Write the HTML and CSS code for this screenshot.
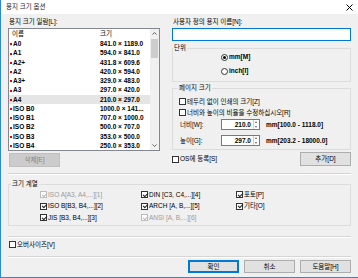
FILE: index.html
```html
<!DOCTYPE html>
<html lang="ko">
<head>
    <meta charset="UTF-8">
    <title>용지 크기 옵션</title>
    <link rel="stylesheet" href="styles.css">
</head>
<body>
    <div class="window">
        <div class="titlebar">
            <span class="title">용지 크기 옵션</span>
            <svg class="close" width="7" height="7" viewBox="0 0 7 7"><path d="M0.5 0.5L6.5 6.5M6.5 0.5L0.5 6.5" stroke="#000" stroke-width="1"/></svg>
        </div>

        <div class="content">
            <div class="top">
                <!-- 왼쪽: 용지 목록 -->
                <div class="left">
                    <div class="label">용지 크기 일람[L]:</div>
                    <div class="list">
                        <div class="list-body">
                            <div class="list-head">
                                <span class="c-name">이름</span>
                                <span class="c-size">크기</span>
                            </div>
                            <div class="row"><span class="c-name mark">A0</span><span class="c-size">841.0 × 1189.0</span></div>
                            <div class="row"><span class="c-name mark">A1</span><span class="c-size">594.0 × 841.0</span></div>
                            <div class="row"><span class="c-name mark">A2+</span><span class="c-size">431.8 × 609.6</span></div>
                            <div class="row"><span class="c-name mark">A2</span><span class="c-size">420.0 × 594.0</span></div>
                            <div class="row"><span class="c-name mark">A3+</span><span class="c-size">329.0 × 483.0</span></div>
                            <div class="row"><span class="c-name mark">A3</span><span class="c-size">297.0 × 420.0</span></div>
                            <div class="row selected"><span class="c-name mark">A4</span><span class="c-size">210.0 × 297.0</span></div>
                            <div class="row"><span class="c-name mark">ISO B0</span><span class="c-size">1000.0 × 141...</span></div>
                            <div class="row"><span class="c-name mark">ISO B1</span><span class="c-size">707.0 × 1000.0</span></div>
                            <div class="row"><span class="c-name mark">ISO B2</span><span class="c-size">500.0 × 707.0</span></div>
                            <div class="row"><span class="c-name mark">ISO B3</span><span class="c-size">353.0 × 500.0</span></div>
                            <div class="row"><span class="c-name mark">ISO B4</span><span class="c-size">250.0 × 353.0</span></div>
                        </div>
                        <div class="scrollbar">
                            <svg class="arrow" width="5" height="3" viewBox="0 0 5 3"><path d="M0.5 2.5L2.5 0.5L4.5 2.5" stroke="#606060" fill="none"/></svg>
                            <span class="thumb"></span>
                            <span class="track"></span>
                            <svg class="arrow" width="5" height="3" viewBox="0 0 5 3"><path d="M0.5 0.5L2.5 2.5L4.5 0.5" stroke="#606060" fill="none"/></svg>
                        </div>
                    </div>
                    <button class="btn disabled">삭제[E]</button>
                </div>

                <!-- 오른쪽: 사용자 정의 -->
                <div class="right">
                    <div class="label">사용자 정의 용지 이름[N]:</div>
                    <div class="name-input"></div>

                    <fieldset class="group unit">
                        <legend>단위</legend>
                        <div class="radios">
                            <div class="opt"><span class="radio on"></span><span class="strong">mm[M]</span></div>
                            <div class="opt"><span class="radio"></span><span class="strong">inch[I]</span></div>
                        </div>
                    </fieldset>

                    <fieldset class="group page">
                        <legend>페이지 크기</legend>
                        <div class="page-inner">
                            <div class="opt"><span class="cb"></span>테두리 없이 인쇄의 크기[Z]</div>
                            <div class="opt"><span class="cb"></span>너비와 높이의 비율을 수정하십시오[R]</div>
                            <div class="size-row first">
                                <span class="size-label">너비[W]:</span>
                                <div class="spin">
                                    <span class="spin-val">210.0</span>
                                    <span class="spin-btns"><i class="up"></i><i class="down"></i></span>
                                </div>
                                <span class="range">mm[100.0 - 1118.0]</span>
                            </div>
                            <div class="size-row">
                                <span class="size-label">높이[G]:</span>
                                <div class="spin">
                                    <span class="spin-val">297.0</span>
                                    <span class="spin-btns"><i class="up"></i><i class="down"></i></span>
                                </div>
                                <span class="range">mm[203.2 - 18000.0]</span>
                            </div>
                        </div>
                    </fieldset>

                    <div class="os-row">
                        <div class="opt"><span class="cb"></span>OS에 등록[S]</div>
                        <button class="btn">추가[D]</button>
                    </div>
                </div>
            </div>

            <div class="sep first-sep"></div>

            <fieldset class="group series">
                <legend>크기 계열</legend>
                <div class="series-grid">
                    <div class="opt off"><span class="cb checked"></span>ISO A[A3, A4,...][1]</div>
                    <div class="opt"><span class="cb checked"></span>DIN [C3, C4,...][4]</div>
                    <div class="opt"><span class="cb checked"></span>포토[P]</div>
                    <div class="opt"><span class="cb checked"></span>ISO B[B3, B4,...][2]</div>
                    <div class="opt"><span class="cb checked"></span>ARCH [A, B,...][5]</div>
                    <div class="opt"><span class="cb checked"></span>기타[O]</div>
                    <div class="opt"><span class="cb checked"></span>JIS [B3, B4,...][3]</div>
                    <div class="opt off"><span class="cb checked"></span>ANSI [A, B,...][6]</div>
                </div>
            </fieldset>

            <div class="sep mid-sep"></div>

            <div class="opt oversize"><span class="cb"></span>오버사이즈[V]</div>

            <div class="sep last-sep"></div>

            <div class="buttons">
                <button class="btn default">확인</button>
                <button class="btn">취소</button>
                <button class="btn">도움말[H]</button>
            </div>
        </div>
    </div>
</body>
</html>
```

FILE: styles.css
```css
*{
    padding: 0;
    margin: 0;
    box-sizing: border-box;
}

body{
    background-color: #f0f0f0;
}

.window{
    width: 358px;
    height: 278px;
    background-color: #f0f0f0;
    border-left: 1px solid #2b8ad8;
    border-bottom: 1px solid #2b8ad8;
    font-family: "Liberation Sans", "Noto Sans CJK KR", sans-serif;
    font-size: 6.5px;
    line-height: 8px;
    color: #000;
}

/* ==================타이틀바===================== */
.titlebar{
    height: 14px;
    background-color: #fff;
    display: flex;
    align-items: center;
    justify-content: space-between;
    padding: 0 5px 0 5px;
}

.titlebar .title{
    color: #222;
}

/* ==================본문===================== */
.content{
    padding: 4px 7px 0 7px;
}

.top{
    display: flex;
    gap: 12px;
}

.left{
    width: 152px;
}

.right{
    flex: 1;
}

.label{
    height: 8px;
    padding-left: 1px;
}

/* 목록 */
.list{
    height: 123px;
    margin-top: 2px;
    border: 1px solid #828790;
    background-color: #fff;
    display: flex;
    overflow: hidden;
}

.list-body{
    flex: 1;
}

.list-head{
    display: flex;
    height: 10px;
    line-height: 9px;
}

.row{
    display: flex;
    height: 9.27px;
    line-height: 9.27px;
}

.row.selected{
    background-color: #e5e5e5;
}

.c-name{
    width: 91px;
    padding-left: 3px;
}

.row .c-name{
    padding-left: 1px;
    font-weight: bold;
}

.row .c-size{
    font-weight: bold;
}

.mark::before{
    content: '';
    display: inline-block;
    width: 2px;
    height: 2px;
    margin-right: 1px;
    vertical-align: middle;
    background-color: #e00;
}

.scrollbar{
    width: 9px;
    background-color: #f0f0f0;
    display: flex;
    flex-direction: column;
    align-items: center;
}

.scrollbar .arrow{
    margin: 3px 0 3px;
}

.scrollbar .thumb{
    width: 7px;
    height: 19px;
    margin-top: 1px;
    background-color: #cdcdcd;
}

.scrollbar .track{
    flex: 1;
}

/* 버튼 */
.btn{
    display: block;
    width: 51px;
    height: 14px;
    border: 1px solid #adadad;
    background-color: #e1e1e1;
    font: inherit;
    color: #000;
}

.btn.disabled{
    margin-top: 2px;
    margin-left: 1px;
    background-color: #cccccc;
    border-color: #bfbfbf;
    color: #838383;
}

.btn.default{
    border: 1px solid #0078d7;
    box-shadow: inset 0 0 0 1px #0078d7;
}

/* 입력 */
.name-input{
    height: 13px;
    margin-top: 2px;
    border: 1px solid #0078d7;
    background-color: #fff;
}

/* 그룹 박스 */
.group{
    border: 1px solid #dcdcdc;
    padding: 0;
    min-width: 0;
}

.group legend{
    padding: 0 1px;
    line-height: 8px;
}

.unit{
    margin-top: 3px;
}

.page{
    margin-top: 2px;
}

.page legend{
    margin-left: 5px;
}

.series{
    margin-top: 5px;
}

.series legend{
    margin-left: 2px;
}

.opt{
    display: flex;
    align-items: center;
    height: 9px;
}

.strong{
    font-weight: bold;
}

.radios{
    padding: 0 0 5px 48px;
    display: flex;
    flex-direction: column;
    gap: 4px;
}

.radios .opt{
    height: 10px;
}

.radio{
    position: relative;
    width: 7px;
    height: 7px;
    margin-right: 1px;
    border: 1px solid #333;
    border-radius: 50%;
    background-color: #fff;
}

.radio.on::after{
    content: '';
    position: absolute;
    left: 1px;
    top: 1px;
    width: 3px;
    height: 3px;
    border-radius: 50%;
    background-color: #000;
}

.cb{
    position: relative;
    flex: none;
    width: 7px;
    height: 7px;
    margin-right: 1px;
    border: 1px solid #333;
    background-color: #fff;
}

.cb.checked::after{
    content: '';
    position: absolute;
    left: 1.5px;
    top: -0.5px;
    width: 2px;
    height: 4px;
    border: solid #222;
    border-width: 0 1px 1px 0;
    transform: rotate(45deg);
}

.opt.off{
    color: #9a9a9a;
}

.opt.off .cb{
    border-color: #bcbcbc;
}

.opt.off .cb.checked::after{
    border-color: #bcbcbc;
}

/* 페이지 크기 */
.page-inner{
    padding: 5px 0 3px 6px;
    display: flex;
    flex-direction: column;
    gap: 2px;
}

.size-row{
    display: flex;
    align-items: center;
    height: 11px;
    margin-top: 3px;
}

.size-row.first{
    margin-top: 0;
}

.size-label{
    width: 42px;
    padding-left: 1px;
}

.spin{
    display: flex;
    width: 39px;
    height: 11px;
    border: 1px solid #7a7a7a;
    background-color: #fff;
}

.spin-val{
    flex: 1;
    text-align: right;
    padding-right: 2px;
    line-height: 9px;
    font-weight: bold;
}

.spin-btns{
    width: 6px;
    display: flex;
    flex-direction: column;
    border-left: 1px solid #d0d0d0;
}

.spin-btns i{
    flex: 1;
    position: relative;
}

.spin-btns .up::after,
.spin-btns .down::after{
    content: '';
    position: absolute;
    left: 1px;
    top: 1px;
    border-left: 1.5px solid transparent;
    border-right: 1.5px solid transparent;
}

.spin-btns .up::after{
    border-bottom: 2px solid #606060;
}

.spin-btns .down::after{
    border-top: 2px solid #606060;
}

.range{
    margin-left: 6px;
    font-weight: bold;
}

.os-row{
    display: flex;
    align-items: center;
    justify-content: space-between;
    margin-top: 2px;
}

/* 구분선 */
.sep{
    height: 2px;
    border-top: 1px solid #d5d5d5;
    border-bottom: 1px solid #fff;
}

.first-sep{
    margin-top: 6px;
}

.mid-sep{
    margin-top: 10px;
}

.last-sep{
    margin-top: 7px;
}

/* 크기 계열 */
.series-grid{
    display: grid;
    grid-template-columns: 101px 95px 1fr;
    row-gap: 2.5px;
    padding: 2px 0 3px 31px;
}

.oversize{
    margin-top: 2px;
    padding-left: 1px;
}

.buttons{
    display: flex;
    justify-content: flex-end;
    gap: 5px;
    margin-top: 2px;
}

.buttons .btn{
    height: 13px;
}
```
